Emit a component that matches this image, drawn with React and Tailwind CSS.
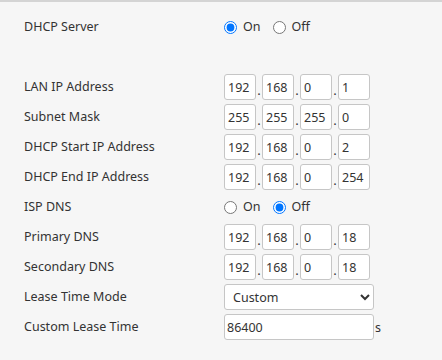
import React from 'react'

const IpInput = ({ parts }) => (
  <div className="flex items-center">
    {parts.map((p, i) => (
      <React.Fragment key={i}>
        {i > 0 && <span className="w-[6px] text-center text-[13px] leading-none text-[#333] pt-[7px]">.</span>}
        <input
          type="text"
          defaultValue={p}
          className="h-[26px] w-[32px] rounded-[3px] border border-[#c6c6c6] bg-white px-[3px] text-[12.5px] text-[#333] outline-none"
        />
      </React.Fragment>
    ))}
  </div>
)

const Radio = ({ name, value }) => (
  <div className="flex items-center text-[12.5px] text-[#333]">
    <label className="flex items-center">
      <input type="radio" name={name} defaultChecked={value === 'on'} className="m-0 h-[13px] w-[13px] accent-[#0075ff]" />
      <span className="ml-[6px]">On</span>
    </label>
    <label className="ml-[12px] flex items-center">
      <input type="radio" name={name} defaultChecked={value === 'off'} className="m-0 h-[13px] w-[13px] accent-[#0075ff]" />
      <span className="ml-[6px]">Off</span>
    </label>
  </div>
)

const Row = ({ label, children }) => (
  <div className="flex h-[30px] items-center">
    <div className="w-[200px] text-[12.5px] text-[#333]">{label}</div>
    <div className="flex items-center">{children}</div>
  </div>
)

export default function App() {
  return (
    <div
      className="h-[360px] w-[442px] border-t-2 border-[#d4d4d4] bg-[#f6f6f6] pl-[24px] pt-[10px]"
      style={{ fontFamily: '"Noto Sans", "Open Sans", Arial, sans-serif' }}
    >
      <Row label="DHCP Server">
        <Radio name="dhcp" value="on" />
      </Row>
      <div className="h-[30px]" />
      <Row label="LAN IP Address"><IpInput parts={['192', '168', '0', '1']} /></Row>
      <Row label="Subnet Mask"><IpInput parts={['255', '255', '255', '0']} /></Row>
      <Row label="DHCP Start IP Address"><IpInput parts={['192', '168', '0', '2']} /></Row>
      <Row label="DHCP End IP Address"><IpInput parts={['192', '168', '0', '254']} /></Row>
      <Row label="ISP DNS">
        <Radio name="isp" value="off" />
      </Row>
      <Row label="Primary DNS"><IpInput parts={['192', '168', '0', '18']} /></Row>
      <Row label="Secondary DNS"><IpInput parts={['192', '168', '0', '18']} /></Row>
      <Row label="Lease Time Mode">
        <select
          defaultValue="custom"
          className="h-[26px] w-[150px] rounded-[3px] border border-[#c6c6c6] bg-white pl-[4px] text-[12.5px] text-[#333] outline-none"
        >
          <option value="custom">Custom</option>
          <option value="1h">1 Hour</option>
          <option value="1d">1 Day</option>
        </select>
      </Row>
      <Row label="Custom Lease Time">
        <input
          type="text"
          defaultValue="86400"
          className="h-[26px] w-[150px] rounded-[3px] border border-[#c6c6c6] bg-white px-[2px] text-[12.5px] text-[#333] outline-none"
        />
        <span className="ml-[1px] pt-[2px] text-[12.5px] text-[#333]">s</span>
      </Row>
    </div>
  )
}
